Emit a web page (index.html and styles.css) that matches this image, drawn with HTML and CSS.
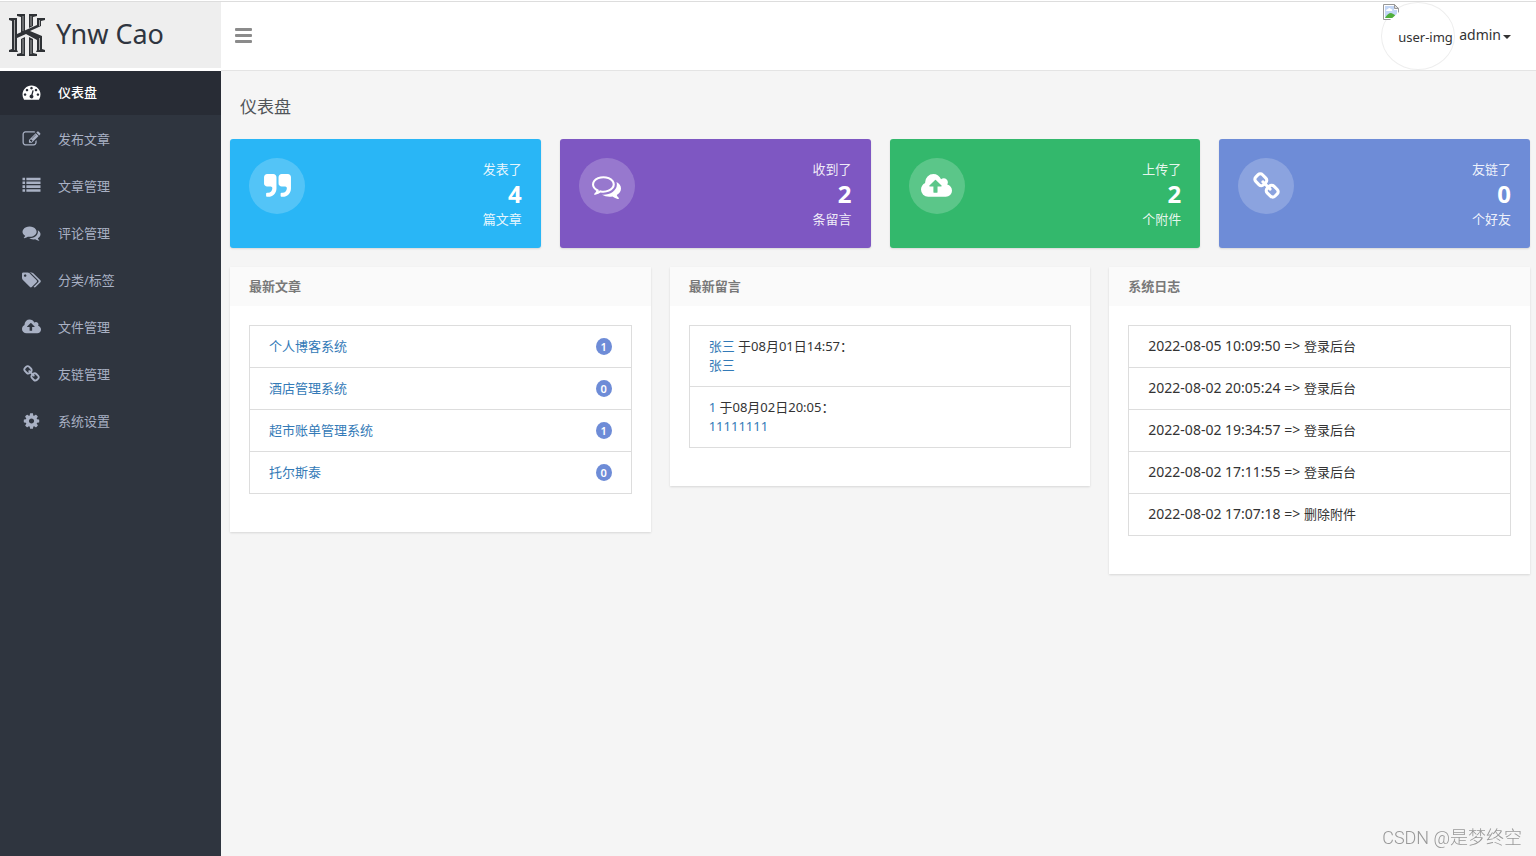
FILE: index.html
```html
<!DOCTYPE html>
<html lang="zh-CN">
<head>
<meta charset="utf-8">
<title>仪表盘</title>
<link rel="stylesheet" href="styles.css">
</head>
<body>
<svg class="sprite" aria-hidden="true">
  <symbol id="i-dash" viewBox="0 0 1792 1792"><path d="M384 1152q0-53-37.5-90.5t-90.5-37.5-90.5 37.5-37.5 90.5 37.5 90.5 90.5 37.5 90.5-37.5 37.5-90.5zm192-448q0-53-37.5-90.5t-90.5-37.5-90.5 37.5-37.5 90.5 37.5 90.5 90.5 37.5 90.5-37.5 37.5-90.5zm428 481l101-382q6-26-7.5-48.5t-38.5-29.5-48 6.5-30 39.5l-101 382q-60 5-107 43.5t-63 98.5q-20 77 20 146t117 89 146-20 89-117q16-60-6-117t-72-91zm660-33q0-53-37.5-90.5t-90.5-37.5-90.5 37.5-37.5 90.5 37.5 90.5 90.5 37.5 90.5-37.5 37.5-90.5zm-640-640q0-53-37.5-90.5t-90.5-37.5-90.5 37.5-37.5 90.5 37.5 90.5 90.5 37.5 90.5-37.5 37.5-90.5zm448 192q0-53-37.5-90.5t-90.5-37.5-90.5 37.5-37.5 90.5 37.5 90.5 90.5 37.5 90.5-37.5 37.5-90.5zm320 448q0 261-141 483-19 29-54 29h-1402q-35 0-54-29-141-221-141-483 0-182 71-348t191-286 286-191 348-71 348 71 286 191 191 286 71 348z"/></symbol>
  <symbol id="i-edit" viewBox="0 0 1792 1792"><path d="M888 1184l116-116-152-152-116 116v56h96v96h56zm440-720q-16-16-33 1l-350 350q-17 17-1 33t33-1l350-350q17-17 1-33zm80 594v190q0 119-84.5 203.5t-203.5 84.5h-832q-119 0-203.5-84.5t-84.5-203.5v-832q0-119 84.5-203.5t203.5-84.5h832q63 0 117 25 15 7 18 23 3 17-9 29l-49 49q-14 14-32 8-23-6-45-6h-832q-66 0-113 47t-47 113v832q0 66 47 113t113 47h832q66 0 113-47t47-113v-126q0-13 9-22l64-64q15-15 35-7t20 29zm-96-738l288 288-672 672h-288v-288zm444 132l-92 92-288-288 92-92q28-28 68-28t68 28l152 152q28 28 28 68t-28 68z"/></symbol>
  <symbol id="i-list" viewBox="0 0 1792 1792"><path d="M0 1216h256v256H0zM0 832h256v256H0zM0 448h256v256H0zM384 1216h1408v256H384zM0 64h256v256H0zM384 832h1408v256H384zM384 448h1408v256H384zM384 64h1408v256H384z"/></symbol>
  <symbol id="i-comments" viewBox="0 0 1792 1792"><path d="M1408 768q0 139-94 257t-256.5 186.5-353.5 68.5q-86 0-176-16-124 88-278 128-36 9-86 16h-3q-11 0-20.5-8t-11.5-21q-1-3-1-6.500t.5-6.500 2-6l2.500-5 3.500-5.500 4-5 4.500-5 4-4.500q5-6 23-25t26-29.500 22.500-29 25-38.500 20.500-44q-124-72-195-177t-71-224q0-139 94-257t256.500-186.500 353.500-68.500 353.500 68.500 256.500 186.500 94 257zm384 256q0 120-71 224.500t-195 176.500q10 24 20.500 44t25 38.500 22.500 29 26 29.500 23 25q1 1 4 4.500t4.500 5 4 5 3.500 5.500l2.500 5 2 6 .5 6.500-1 6.500q-3 14-13 22t-22 7q-50-7-86-16-154-40-278-128-90 16-176 16-271 0-472-132 58 4 88 4 161 0 309-45t264-129q125-92 192-212t67-254q0-77-23-152 129 71 204 178t75 230z"/></symbol>
  <symbol id="i-comments-o" viewBox="0 0 1792 1792"><path d="M704 384q-153 0-286 52t-211.500 141-78.500 191q0 82 53 158t149 132l97 56-35 84q34-20 62-39l44-31 53 10q78 14 153 14 153 0 286-52t211.500-141 78.500-191-78.500-191-211.500-141-286-52zm0-128q191 0 353.500 68.500t256.500 186.500 94 257-94 257-256.500 186.500-353.500 68.500q-86 0-176-16-124 88-278 128-36 9-86 16h-3q-11 0-20.500-8t-11.500-21q-1-3-1-6.500t.5-6.500 2-6l2.500-5 3.500-5.500 4-5 4.500-5 4-4.500q5-6 23-25t26-29.500 22.500-29 25-38.500 20.500-44q-124-72-195-177t-71-224q0-139 94-257t256.500-186.500 353.500-68.500zm822 1169q10 24 20.500 44t25 38.500 22.500 29 26 29.500 23 25q1 1 4 4.500t4.500 5 4 5 3.500 5.500l2.500 5 2 6 .5 6.500-1 6.500q-3 14-13 22t-22 7q-50-7-86-16-154-40-278-128-90 16-176 16-271 0-472-132 58 4 88 4 161 0 309-45t264-129q125-92 192-212t67-254q0-77-23-152 129 71 204 178t75 230q0 120-71 224.500t-195 176.500z"/></symbol>
  <symbol id="i-tags" viewBox="0 0 1920 1792"><path d="M448 448q0-53-37.500-90.500t-90.500-37.500-90.500 37.500-37.500 90.500 37.500 90.500 90.500 37.500 90.500-37.500 37.500-90.500zm1067 576q0 53-37 90l-491 492q-39 37-91 37-53 0-90-37l-715-716q-38-37-64.500-101t-26.500-117v-416q0-52 38-90t90-38h416q53 0 117 26.500t102 64.500l715 714q37 39 37 91zm384 0q0 53-37 90l-491 492q-39 37-91 37-36 0-59-14t-53-45l470-470q37-37 37-90 0-52-37-91l-715-714q-38-38-102-64.500t-117-26.500h224q53 0 117 26.500t102 64.500l715 714q37 39 37 91z"/></symbol>
  <symbol id="i-cloud" viewBox="0 0 1920 1792"><path d="M1280 864q0-14-9-23l-352-352q-9-9-23-9t-23 9l-351 351q-10 12-10 24 0 14 9 23t23 9h224v352q0 13 9.500 22.500t22.500 9.500h192q13 0 22.500-9.500t9.500-22.500v-352h224q13 0 22.500-9.500t9.500-22.500zm640 288q0 159-112.500 271.500t-271.500 112.500h-1088q-185 0-316.500-131.500t-131.500-316.500q0-130 70-240t188-165q-2-30-2-43 0-212 150-362t362-150q156 0 285.500 87t188.500 231q71-62 166-62 106 0 181 75t75 181q0 76-41 138 130 31 213.500 135.500t83.500 238.500z"/></symbol>
  <symbol id="i-link" viewBox="0 0 1792 1792"><path d="M1520 1216q0-40-28-68l-208-208q-28-28-68-28-42 0-72 32 3 3 19 18.500t21.500 21.500 15 19 13 25.500 3.500 27.500q0 40-28 68t-68 28q-15 0-27.500-3.500t-25.500-13-19-15-21.500-21.500-18.500-19q-33 31-33 73 0 40 28 68l206 207q27 27 68 27 40 0 68-26l147-146q28-28 28-67zm-703-705q0-40-28-68l-206-207q-28-28-68-28-39 0-68 27l-147 146q-28 28-28 67 0 40 28 68l208 208q27 27 68 27 42 0 72-31-3-3-19-18.500t-21.500-21.500-15-19-13-25.500-3.500-27.500q0-40 28-68t68-28q15 0 27.500 3.500t25.500 13 19 15 21.500 21.500 18.500 19q33-31 33-73zm895 705q0 120-85 203l-147 146q-83 83-203 83-121 0-204-85l-206-207q-83-83-83-203 0-123 88-209l-88-88q-86 88-208 88-120 0-204-84l-208-208q-84-84-84-204t85-203l147-146q83-83 203-83 121 0 204 85l206 207q83 83 83 203 0 123-88 209l88 88q86-88 208-88 120 0 204 84l208 208q84 84 84 204z"/></symbol>
  <symbol id="i-cog" viewBox="0 0 1792 1792"><path d="M1152 896q0-106-75-181t-181-75-181 75-75 181 75 181 181 75 181-75 75-181zm512-109v222q0 12-8 23t-20 13l-185 28q-19 54-39 91 35 50 107 138 10 12 10 25t-9 23q-27 37-99 108t-94 71q-12 0-26-9l-138-108q-44 23-91 38-16 136-29 186-7 28-36 28h-222q-14 0-24.500-8.500t-11.500-21.500l-28-184q-49-16-90-37l-141 107q-10 9-25 9-14 0-25-11-126-114-165-168-7-10-7-23 0-12 8-23 15-21 51-66.500t54-70.500q-27-50-41-99l-183-27q-13-2-21-12.500t-8-23.500v-222q0-12 8-23t19-13l186-28q14-46 39-92-40-57-107-138-10-12-10-24 0-10 9-23 26-36 98.500-107.500t94.500-71.500q13 0 26 10l138 107q44-23 91-38 16-136 29-186 7-28 36-28h222q14 0 24.500 8.500t11.500 21.500l28 184q49 16 90 37l142-107q9-9 24-9 13 0 25 10 129 119 165 170 7 8 7 22 0 12-8 23-15 21-51 66.500t-54 70.500q26 50 41 98l183 28q13 2 21 12.500t8 23.500z"/></symbol>
  <symbol id="i-quote" viewBox="0 0 1792 1792"><g id="q"><path d="M832 320v704q0 104-40.500 198.500t-109.500 163.500-163.500 109.500-198.500 40.500h-64q-26 0-45-19t-19-45v-128q0-26 19-45t45-19h64q106 0 181-75t75-181v-32q0-40-28-68t-68-28h-224q-80 0-136-56t-56-136v-384q0-80 56-136t136-56h384q80 0 136 56t56 136z"/></g><use href="#q" x="896"/></symbol>
</svg>

<header class="topbar">
  <a class="brand" href="#">
    <svg class="brand-logo" viewBox="0 0 36 44" aria-hidden="true">
      <g fill="#2f3236">
        <path d="M0 5h8v32l1 2H0v-2l3-1V8L0 7z"/>
        <path d="M8 1h8v17l-4 2V4L8 3z"/>
        <path d="M28 1h-8v14l4-2V4l4-1z"/>
        <path d="M36 5h-8v7L8 21v4l9-4 11 6v10l-1 2h9v-2l-3-1V23l-12-5 11-5V8l4-1z"/>
        <path d="M12 26l4-2v19H8v-2l4-1z"/>
        <path d="M20 24l4 2v14l4 1v2h-8z"/>
      </g>
      <path fill="none" stroke="#eee" stroke-width=".6" d="M5.500 7v30M14 3v15M14 26v15M22 3v10M22 27v14M30.500 7v6M30.500 25v12"/>
    </svg>
    <span class="brand-name">Ynw Cao</span>
  </a>
  <div class="topbar-main">
    <button class="menu-toggle" type="button" aria-label="菜单"><span></span><span></span><span></span></button>
    <button class="user" type="button">
      <span class="avatar">
        <svg class="broken" viewBox="0 0 16 16" aria-hidden="true">
          <path fill="#fff" stroke="#999" d="M.5.500h11l4 4v11H.5z"/>
          <path fill="#c3d6f5" d="M2 2h9v4h3v8H2z"/>
          <path fill="#fff" d="M3 7q0-2 2-2 1-2 3 0 2 0 1 2z"/>
          <path fill="#4fae3c" d="M2 14q3-5 6-5 4 1 6 5z"/>
          <path fill="#fff" d="M16 8v8H7z"/>
          <path fill="#ddd" stroke="#999" d="M11.500.500v4h4z"/>
        </svg>
        <span class="avatar-alt">user-img</span>
      </span>
      <span class="user-name">admin</span>
      <span class="caret"></span>
    </button>
  </div>
</header>

<div class="layout">
  <nav class="sidebar">
    <a class="nav-item active" href="#"><svg class="icon"><use href="#i-dash"/></svg><span>仪表盘</span></a>
    <a class="nav-item" href="#"><svg class="icon"><use href="#i-edit"/></svg><span>发布文章</span></a>
    <a class="nav-item" href="#"><svg class="icon"><use href="#i-list"/></svg><span>文章管理</span></a>
    <a class="nav-item" href="#"><svg class="icon"><use href="#i-comments"/></svg><span>评论管理</span></a>
    <a class="nav-item" href="#"><svg class="icon"><use href="#i-tags"/></svg><span>分类/标签</span></a>
    <a class="nav-item" href="#"><svg class="icon"><use href="#i-cloud"/></svg><span>文件管理</span></a>
    <a class="nav-item" href="#"><svg class="icon"><use href="#i-link"/></svg><span>友链管理</span></a>
    <a class="nav-item" href="#"><svg class="icon"><use href="#i-cog"/></svg><span>系统设置</span></a>
  </nav>

  <main class="content">
    <h1 class="page-title">仪表盘</h1>

    <section class="stats">
      <div class="stat blue">
        <span class="stat-icon"><svg><use href="#i-quote"/></svg></span>
        <div class="stat-text"><span>发表了</span><strong>4</strong><span>篇文章</span></div>
      </div>
      <div class="stat purple">
        <span class="stat-icon"><svg><use href="#i-comments-o"/></svg></span>
        <div class="stat-text"><span>收到了</span><strong>2</strong><span>条留言</span></div>
      </div>
      <div class="stat green">
        <span class="stat-icon"><svg><use href="#i-cloud"/></svg></span>
        <div class="stat-text"><span>上传了</span><strong>2</strong><span>个附件</span></div>
      </div>
      <div class="stat indigo">
        <span class="stat-icon"><svg><use href="#i-link"/></svg></span>
        <div class="stat-text"><span>友链了</span><strong>0</strong><span>个好友</span></div>
      </div>
    </section>

    <section class="panels">
      <article class="panel">
        <h2 class="panel-title">最新文章</h2>
        <ul class="list">
          <li class="row"><a href="#">个人博客系统</a><span class="badge">1</span></li>
          <li class="row"><a href="#">酒店管理系统</a><span class="badge">0</span></li>
          <li class="row"><a href="#">超市账单管理系统</a><span class="badge">1</span></li>
          <li class="row"><a href="#">托尔斯泰</a><span class="badge">0</span></li>
        </ul>
      </article>
      <article class="panel">
        <h2 class="panel-title">最新留言</h2>
        <ul class="list">
          <li><a href="#">张三</a> 于08月01日14:57：<br><a href="#">张三</a></li>
          <li><a href="#">1</a> 于08月02日20:05：<br><a href="#">11111111</a></li>
        </ul>
      </article>
      <article class="panel">
        <h2 class="panel-title">系统日志</h2>
        <ul class="list">
          <li><span class="latin">2022-08-05 10:09:50 =&gt; </span>登录后台</li>
          <li><span class="latin">2022-08-02 20:05:24 =&gt; </span>登录后台</li>
          <li><span class="latin">2022-08-02 19:34:57 =&gt; </span>登录后台</li>
          <li><span class="latin">2022-08-02 17:11:55 =&gt; </span>登录后台</li>
          <li><span class="latin">2022-08-02 17:07:18 =&gt; </span>删除附件</li>
        </ul>
      </article>
    </section>
  </main>
</div>

<div class="watermark">CSDN @是梦终空</div>
</body>
</html>
```
FILE: styles.css
```css
* {
  box-sizing: border-box;
}

body {
  display: flex;
  flex-direction: column;
  min-height: 100vh;
  margin: 0;
  background: #f5f5f5;
  color: #333;
  font-family: "Noto Sans", "Noto Sans CJK SC", sans-serif;
  font-size: 13px;
  line-height: 19px;
}

a {
  color: #337ab7;
  text-decoration: none;
}

button {
  padding: 0;
  border: 0;
  background: none;
  color: inherit;
  font: inherit;
  cursor: pointer;
}

.sprite {
  display: none;
}

/* Top bar */
.topbar {
  display: flex;
  height: 71px;
  padding-top: 1px;
  background: #fff;
}

.brand {
  display: flex;
  flex: none;
  align-items: center;
  gap: 11px;
  width: 221px;
  height: 67px;
  padding-left: 9px;
  border-top: 1px solid #ddd;
  background: #eee;
  color: #2f3540;
}

.brand-logo {
  width: 36px;
  height: 44px;
}

.brand-name {
  padding-bottom: 2px;
  font-size: 27px;
  line-height: 36px;
}

.topbar-main {
  display: flex;
  flex: 1;
  align-items: center;
  justify-content: space-between;
  padding: 0 25px 0 14px;
  border-top: 1px solid #ddd;
  border-bottom: 1px solid #e4e4e4;
}

.menu-toggle {
  display: flex;
  flex-direction: column;
  gap: 3px;
  width: 17px;
  padding-bottom: 2px;
}

.menu-toggle span {
  height: 3px;
  border-radius: 1px;
  background: #8b8b8b;
}

.user {
  display: flex;
  align-items: center;
}

.avatar {
  position: relative;
  display: flex;
  align-items: center;
  width: 74px;
  height: 68px;
  margin-right: 4px;
  padding: 2px 0 0 16px;
  border: 1px solid #eee;
  border-radius: 50%;
}

.broken {
  position: absolute;
  top: 1px;
  left: 1px;
  width: 16px;
  height: 16px;
}

.user-name {
  padding-bottom: 4px;
  font-size: 14px;
}

.caret {
  margin: 2px 0 0 2px;
  border-top: 4px solid #333;
  border-right: 4px solid transparent;
  border-left: 4px solid transparent;
}

/* Layout */
.layout {
  display: flex;
  flex: 1;
}

.sidebar {
  display: flex;
  flex: none;
  flex-direction: column;
  gap: 3px;
  width: 221px;
  background: #2f353f;
}

.nav-item {
  display: flex;
  align-items: center;
  gap: 17px;
  height: 44px;
  padding: 0 0 2px 22px;
  color: #a9b1c4;
}

.nav-item.active {
  background: #282c35;
  color: #fff;
  font-weight: 500;
}

.icon {
  width: 19px;
  height: 18px;
  fill: currentColor;
}

.content {
  flex: 1;
  padding: 24px 6px 24px 9px;
}

.page-title {
  margin: 0 0 20px 10px;
  color: #505458;
  font-size: 17px;
  font-weight: 400;
  line-height: 24px;
}

/* Stat cards */
.stats {
  display: grid;
  grid-template-columns: repeat(4, 1fr);
  gap: 19px;
  margin-bottom: 19px;
}

.stat {
  display: flex;
  justify-content: space-between;
  padding: 19px 19px 18px;
  border-radius: 3px;
  box-shadow: 0 1px 2px rgba(0, 0, 0, 0.12);
  color: #fff;
}

.blue {
  background: #29b6f6;
}

.purple {
  background: #7e57c2;
}

.green {
  background: #33b86c;
}

.indigo {
  background: #6e8cd7;
}

.stat-icon {
  display: flex;
  align-items: center;
  justify-content: center;
  width: 56px;
  height: 56px;
  border-radius: 50%;
  background: rgba(255, 255, 255, 0.2);
}

.stat-icon svg {
  width: 31px;
  height: 29px;
  fill: #fff;
}

.stat-text {
  display: flex;
  flex-direction: column;
  color: rgba(255, 255, 255, 0.9);
  line-height: 22px;
  text-align: right;
}

.stat-text strong {
  color: #fff;
  font-size: 24px;
  line-height: 28px;
}

/* Panels */
.panels {
  display: grid;
  grid-template-columns: repeat(3, 1fr);
  align-items: start;
  gap: 19px;
}

.panel {
  background: #fff;
  box-shadow: 0 1px 2px rgba(0, 0, 0, 0.12);
}

.panel-title {
  margin: 0;
  padding: 10px 19px;
  background: #fafafa;
  color: #797979;
  font-size: 13px;
  font-weight: 700;
  line-height: 19px;
}

.list {
  margin: 0;
  padding: 19px 19px 38px;
  list-style: none;
}

.list li {
  padding: 11px 19px;
  border: 1px solid #ddd;
}

.list li + li {
  border-top: 0;
}

.list .row {
  display: flex;
  align-items: center;
  justify-content: space-between;
}

.list .latin {
  font-size: 14px;
  line-height: 1;
}

.badge {
  width: 16px;
  height: 17px;
  border-radius: 50%;
  background: #6e8cd7;
  color: #fff;
  font-size: 11px;
  font-weight: 600;
  line-height: 17px;
  text-align: center;
}

.watermark {
  position: fixed;
  right: 14px;
  bottom: 6px;
  color: #999;
  font-family: Roboto, "Noto Sans CJK SC", sans-serif;
  font-size: 18px;
  font-weight: 300;
  line-height: 24px;
}
```
